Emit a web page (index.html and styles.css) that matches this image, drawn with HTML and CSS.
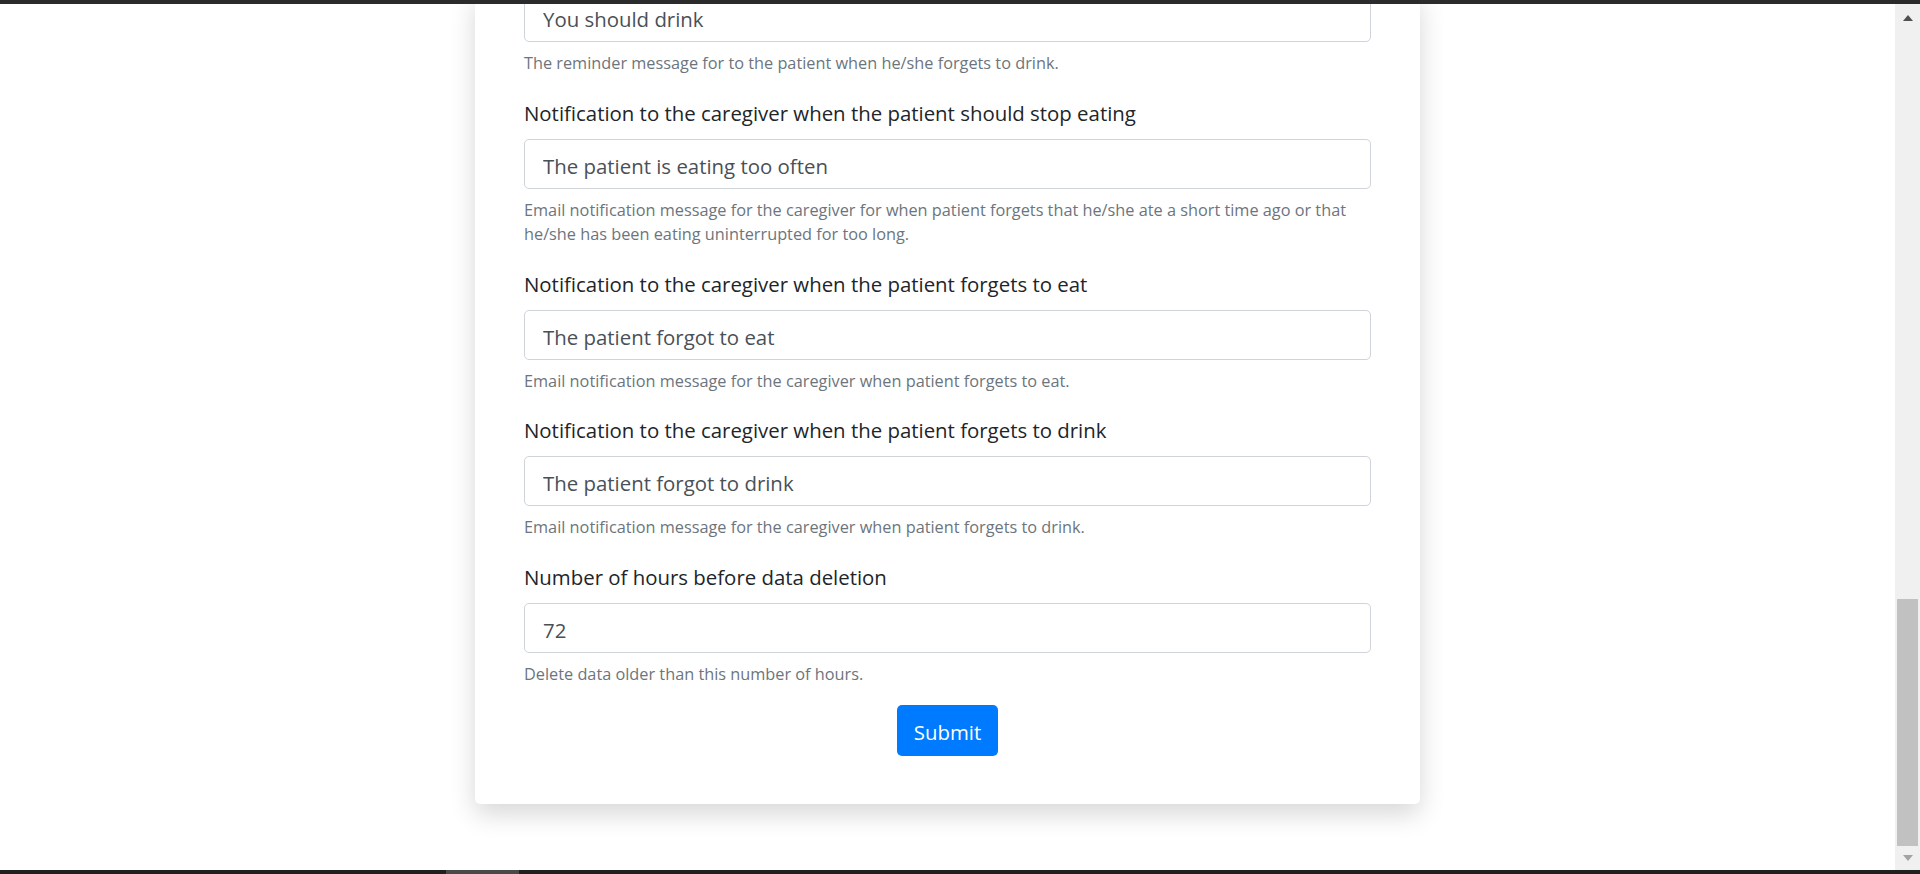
FILE: index.html
```html
<!DOCTYPE html>
<html lang="en">
<head>
<meta charset="utf-8">
<title>Settings</title>
<link rel="stylesheet" href="styles.css">
</head>
<body>
<div class="topbar"></div>
<div class="window">
  <main class="viewport">
    <div class="card">
      <form class="settings-form">
        <div class="group">
          <input class="control" id="drink-reminder" type="text" value="You should drink">
          <small class="help">The reminder message for to the patient when he/she forgets to drink.</small>
        </div>
        <div class="group">
          <label class="label" for="stop-eating">Notification to the caregiver when the patient should stop eating</label>
          <input class="control" id="stop-eating" type="text" value="The patient is eating too often">
          <small class="help">Email notification message for the caregiver for when patient forgets that he/she ate a short time ago or that he/she has been eating uninterrupted for too long.</small>
        </div>
        <div class="group">
          <label class="label" for="forgot-eat">Notification to the caregiver when the patient forgets to eat</label>
          <input class="control" id="forgot-eat" type="text" value="The patient forgot to eat">
          <small class="help">Email notification message for the caregiver when patient forgets to eat.</small>
        </div>
        <div class="group">
          <label class="label" for="forgot-drink">Notification to the caregiver when the patient forgets to drink</label>
          <input class="control" id="forgot-drink" type="text" value="The patient forgot to drink">
          <small class="help">Email notification message for the caregiver when patient forgets to drink.</small>
        </div>
        <div class="group group--last">
          <label class="label" for="hours">Number of hours before data deletion</label>
          <input class="control" id="hours" type="text" value="72">
          <small class="help">Delete data older than this number of hours.</small>
        </div>
        <div class="actions">
          <button type="button" class="btn">Submit</button>
        </div>
      </form>
    </div>
  </main>
  <div class="scrollbar">
    <div class="sb-btn sb-btn--up"><span class="arrow arrow--up"></span></div>
    <div class="sb-track"><div class="sb-thumb"></div></div>
    <div class="sb-btn"><span class="arrow arrow--down"></span></div>
  </div>
</div>
<div class="bottombar"><span class="bottombar__seg"></span></div>
</body>
</html>
```

FILE: styles.css
```css
* {
  box-sizing: border-box;
}

html,
body {
  margin: 0;
  height: 100%;
}

body {
  font-family: "Open Sans", "Noto Sans", sans-serif;
  background: #fff;
  color: #212529;
  display: flex;
  flex-direction: column;
  overflow: hidden;
}

.topbar {
  flex: none;
  height: 4px;
  background: #2b2b2b;
}

.window {
  flex: 1;
  min-height: 0;
  display: flex;
}

.viewport {
  flex: 1;
  min-width: 0;
  display: flex;
  flex-direction: column;
  justify-content: flex-end;
  align-items: center;
  overflow: hidden;
  padding-bottom: 66px;
}

.card {
  flex: none;
  width: 945px;
  background: #fff;
  border-radius: 5px;
  box-shadow: 0 10px 26px rgba(0, 0, 0, 0.16);
  padding: 0 49px 48px;
}

.settings-form {
  display: flex;
  flex-direction: column;
}

.group {
  display: flex;
  flex-direction: column;
  margin-bottom: 22px;
}

.group--last {
  margin-bottom: 19px;
}

.label {
  font-size: 20.4px;
  line-height: 30px;
  margin-bottom: 11px;
  color: #212529;
}

.control {
  display: block;
  width: 100%;
  height: 50px;
  margin: 0;
  border: 1px solid #ced4da;
  border-radius: 5px;
  padding: 12px 18px 8px;
  font-family: "Open Sans", "Noto Sans", sans-serif;
  font-size: 20.4px;
  line-height: 28px;
  color: #495057;
  background: #fff;
  outline: none;
}

.help {
  display: block;
  margin-top: 9px;
  font-size: 16.3px;
  line-height: 24.5px;
  color: #6c757d;
}

.actions {
  display: flex;
  justify-content: center;
}

.btn {
  font-family: "Open Sans", "Noto Sans", sans-serif;
  font-size: 20.4px;
  line-height: 30px;
  color: #fff;
  background: #007bff;
  border: 0;
  border-radius: 5px;
  padding: 12px 17px 9px;
  cursor: pointer;
}

.scrollbar {
  flex: none;
  width: 25px;
  background: #f0f0f0;
  display: flex;
  flex-direction: column;
}

.sb-btn {
  flex: none;
  height: 24px;
  display: flex;
  align-items: center;
  justify-content: center;
}

.sb-btn--up {
  padding-top: 3px;
}

.arrow {
  width: 0;
  height: 0;
  border-left: 5.5px solid transparent;
  border-right: 5.5px solid transparent;
}

.arrow--up {
  border-bottom: 6px solid #505050;
}

.arrow--down {
  border-top: 6px solid #a3a3a3;
}

.sb-track {
  flex: 1;
  display: flex;
  flex-direction: column;
  justify-content: flex-end;
  padding: 0 2px;
}

.sb-thumb {
  height: 247px;
  background: #c1c1c1;
}

.bottombar {
  flex: none;
  height: 4px;
  background: #202020;
  display: flex;
  padding-left: 446px;
}

.bottombar__seg {
  width: 73px;
  background: #4a4a4a;
}
```
